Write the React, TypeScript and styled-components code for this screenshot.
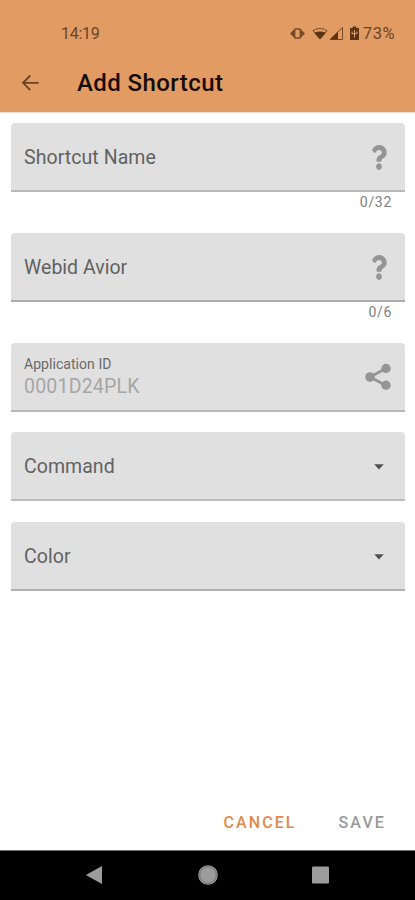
import React from 'react';
import styled, { createGlobalStyle } from 'styled-components';
import { FaQuestion } from 'react-icons/fa';

const GlobalStyle = createGlobalStyle`
  * { box-sizing: border-box; }
  body { margin: 0; background: #fff; font-family: Roboto, "Liberation Sans", sans-serif; }
`;

const Screen = styled.div`
  width: 415px;
  height: 900px;
  display: flex;
  flex-direction: column;
  background: #fff;
  overflow: hidden;
`;

const Header = styled.header`
  height: 112px;
  flex: none;
  background: #e29b63;
  box-shadow: 0 1px 1px #f6dccd;
`;

const StatusBar = styled.div`
  height: 56px;
  padding: 11px 20px 0 61px;
  display: flex;
  align-items: center;
  justify-content: space-between;
  font-size: 16px;
  line-height: 20px;
  color: #6b452a;
`;

const Clock = styled.span`
  letter-spacing: -0.3px;
`;

const StatusIcons = styled.div`
  display: flex;
  align-items: center;

  svg { display: block; }
`;

const Battery = styled.span`
  margin-left: 4px;
  font-size: 16.5px;
  letter-spacing: 0.5px;
`;

const TitleBar = styled.div`
  height: 54px;
  display: flex;
  align-items: center;
  padding-left: 21px;
`;

const BackButton = styled.button`
  width: 56px;
  padding: 0;
  border: 0;
  background: none;
  display: flex;
`;

const Title = styled.h1`
  margin: 0;
  font-size: 24px;
  line-height: 28px;
  font-weight: 500;
  letter-spacing: 0.42px;
  color: #160c05;
`;

const Form = styled.main`
  flex: 1;
  padding: 11px 10px 0 11px;
`;

const FieldGroup = styled.div<{ $height: number }>`
  height: ${(p) => p.$height}px;
`;

const Field = styled.div<{ $line: string }>`
  height: 69px;
  padding: 0 14px 0 13px;
  display: flex;
  align-items: center;
  justify-content: space-between;
  background: #e0e0e0;
  border-radius: 4px 4px 0 0;
  border-bottom: 2px solid ${(p) => p.$line};

  svg { display: block; flex: none; }
`;

const Label = styled.span<{ $spacing: number }>`
  padding-top: 2px;
  font-size: 19.5px;
  line-height: 24px;
  letter-spacing: ${(p) => p.$spacing}px;
  color: #626262;
`;

const Filled = styled.div`
  display: flex;
  flex-direction: column;
  padding-top: 1px;
`;

const SmallLabel = styled.span`
  font-size: 14px;
  line-height: 18px;
  letter-spacing: 0.05px;
  color: #6a6a6a;
`;

const Value = styled.span`
  font-size: 19.5px;
  line-height: 27px;
  letter-spacing: 0.2px;
  color: #a6a6a6;
`;

const Counter = styled.div`
  padding: 1px 13px 0 0;
  text-align: right;
  font-size: 14px;
  line-height: 18px;
  letter-spacing: 0.7px;
  color: #808080;
`;

const IconSlot = styled.span<{ $width: number }>`
  width: ${(p) => p.$width}px;
  padding-top: 1px;
  display: flex;
  justify-content: center;
  color: #959595;
`;

const HelpSlot = styled(IconSlot)`
  svg { width: 16px; height: 25px; }
`;

const DropSlot = styled(IconSlot)`
  padding-top: 2px;
`;

const Actions = styled.footer`
  height: 57px;
  padding: 2px 29px 0 0;
  display: flex;
  justify-content: flex-end;
  align-items: center;
  gap: 41px;
`;

const Action = styled.button<{ $color: string }>`
  padding: 0;
  border: 0;
  background: none;
  font: 500 16px/20px Roboto, "Liberation Sans", sans-serif;
  letter-spacing: 2.1px;
  color: ${(p) => p.$color};

  &:first-child { margin-right: 1px; }
`;

const NavBar = styled.nav`
  height: 50px;
  flex: none;
  background: #000;
  border-top: 1px solid #707070;
  display: flex;
  justify-content: space-between;
  align-items: center;
  padding: 0 85px 1px 85px;
`;

const HelpIcon = () => (
  <HelpSlot $width={24}>
    <FaQuestion preserveAspectRatio="none" />
  </HelpSlot>
);

const ShareIcon = () => (
  <IconSlot $width={26}>
    <svg width="26" height="28" viewBox="0 0 26 28">
      <path d="M21 5.5 5 14l16 8.5" fill="none" stroke="currentColor" strokeWidth="2.9" />
      <circle cx="5" cy="14" r="4.8" fill="currentColor" />
      <circle cx="21" cy="5.5" r="4.7" fill="currentColor" />
      <circle cx="21" cy="22.3" r="4.7" fill="currentColor" />
    </svg>
  </IconSlot>
);

const DropIcon = () => (
  <DropSlot $width={24}>
    <svg width="10" height="6" viewBox="0 0 10 6">
      <path d="M.2.3h9.6L5 5.4z" fill="#505050" />
    </svg>
  </DropSlot>
);

export default function App() {
  return (
    <>
      <GlobalStyle />
      <Screen>
        <Header>
          <StatusBar>
            <Clock>14:19</Clock>
            <StatusIcons>
              <svg width="60" height="18" viewBox="0 0 60 18">
                <g fill="#744a2a">
                  <path d="M0 8.5l4-4v8zM15 8.5l-4-4v8z" />
                  <rect x="4.6" y="4" width="5.8" height="9" rx="1" fill="none" stroke="#744a2a" strokeWidth="1.6" />
                  <path d="M23 5.8Q30 .8 37 5.8L30 14z" fill="none" stroke="#744a2a" strokeWidth="1" />
                  <path d="M24.3 7.8q5.7-2.8 11.4 0L30 14.3z" fill="#5c3315" />
                  <path d="M40 14.5 52.5 2.5v12z" fill="none" stroke="#744a2a" strokeWidth="1" />
                  <path d="M40 14.5l8-8v8z" fill="#5c3315" />
                </g>
              </svg>
              <svg width="9" height="18" viewBox="0 0 9 18">
                <path d="M2.7 1.5h3.6v1.4H9V15H0V2.9h2.7z" fill="#5c3315" />
                <path d="M4.5 5v7.5M2 6.5v2.2h5V6.5" fill="none" stroke="#dda476" strokeWidth="1" />
              </svg>
              <Battery>73%</Battery>
            </StatusIcons>
          </StatusBar>
          <TitleBar>
            <BackButton aria-label="Back">
              <svg width="19" height="18" viewBox="0 0 19 18">
                <path d="M17.6 8.8H2M9.3 1.5 2 8.8l7.3 7.3" fill="none" stroke="#6b4224" strokeWidth="1.8" />
              </svg>
            </BackButton>
            <Title>Add Shortcut</Title>
          </TitleBar>
        </Header>
        <Form>
          <FieldGroup $height={110}>
            <Field $line="#b8b8b8">
              <Label $spacing={0.07}>Shortcut Name</Label>
              <HelpIcon />
            </Field>
            <Counter>0/32</Counter>
          </FieldGroup>
          <FieldGroup $height={110}>
            <Field $line="#adadad">
              <Label $spacing={0.02}>Webid Avior</Label>
              <HelpIcon />
            </Field>
            <Counter>0/6</Counter>
          </FieldGroup>
          <FieldGroup $height={89}>
            <Field $line="#b8b8b8">
              <Filled>
                <SmallLabel>Application ID</SmallLabel>
                <Value>0001D24PLK</Value>
              </Filled>
              <ShareIcon />
            </Field>
          </FieldGroup>
          <FieldGroup $height={90}>
            <Field $line="#bdbdbd">
              <Label $spacing={0.05}>Command</Label>
              <DropIcon />
            </Field>
          </FieldGroup>
          <FieldGroup $height={69}>
            <Field $line="#b0b0b0">
              <Label $spacing={0.05}>Color</Label>
              <DropIcon />
            </Field>
          </FieldGroup>
        </Form>
        <Actions>
          <Action $color="#e08a4c">CANCEL</Action>
          <Action $color="#999">SAVE</Action>
        </Actions>
        <NavBar>
          <svg width="18" height="20" viewBox="0 0 18 20">
            <path d="M.8 10 17 1v18z" fill="#9c9c9c" />
          </svg>
          <svg width="22" height="22" viewBox="0 0 22 22">
            <circle cx="11" cy="11" r="9.8" fill="#9c9c9c" />
            <circle cx="11" cy="11" r="8.3" fill="none" stroke="#666" strokeWidth=".8" />
          </svg>
          <svg width="18" height="18" viewBox="0 0 18 18">
            <rect x="0" y=".5" width="17" height="17" rx="1.2" fill="#9c9c9c" />
          </svg>
        </NavBar>
      </Screen>
    </>
  );
}
